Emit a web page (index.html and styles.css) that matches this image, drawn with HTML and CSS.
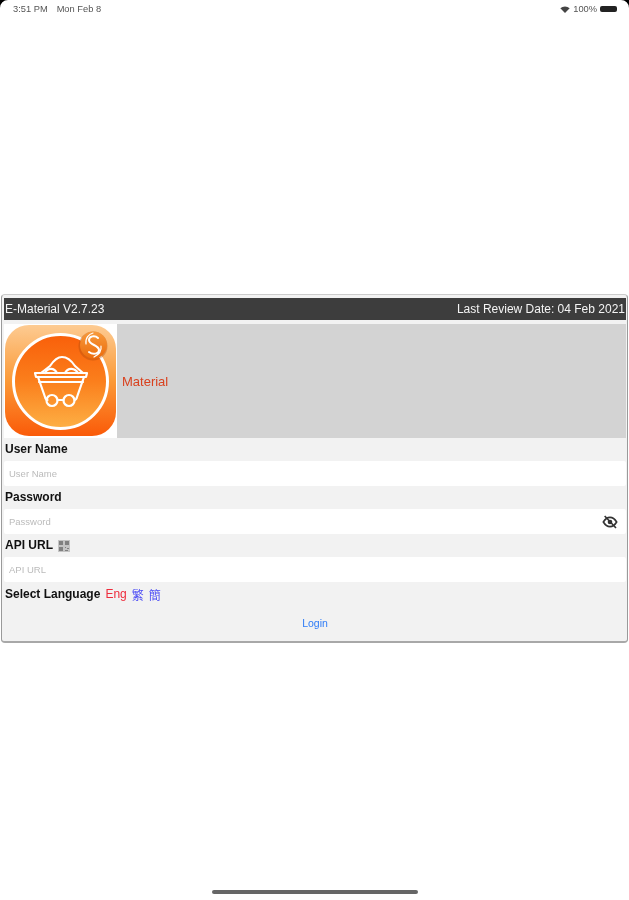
FILE: index.html
```html
<!DOCTYPE html>
<html lang="en">
<head>
    <meta charset="UTF-8">
    <meta name="viewport" content="width=device-width, initial-scale=1.0">
    <title>E-Material</title>
    <link rel="stylesheet" href="styles.css">
</head>
<body>
    <div class="corner corner-left"></div>
    <div class="corner corner-right"></div>

    <div class="status-bar">
        <span class="status-left"><span>3:51 PM</span><span>Mon Feb 8</span></span>
        <span class="status-right">
            <svg class="wifi" viewBox="0 0 12 9" width="10" height="7"><path d="M6 9 0 3a8.500 8.500 0 0 1 12 0z" fill="#444"/></svg>
            100%
            <span class="battery"></span>
        </span>
    </div>

    <div class="screen">
        <div class="panel">
            <div class="title-bar">
                <span>E-Material V2.7.23</span>
                <span>Last Review Date: 04 Feb 2021</span>
            </div>

            <div class="banner">
                <svg class="logo" viewBox="0 0 113 114" width="113" height="114">
                    <defs>
                        <linearGradient id="bg" x1="0" y1="0" x2="0" y2="1">
                            <stop offset="0" stop-color="#fdcb92"/>
                            <stop offset="0.5" stop-color="#fb9a38"/>
                            <stop offset="1" stop-color="#fa5a08"/>
                        </linearGradient>
                        <linearGradient id="disc" x1="0" y1="0" x2="0" y2="1">
                            <stop offset="0" stop-color="#f95f0a"/>
                            <stop offset="0.5" stop-color="#fb7f1c"/>
                            <stop offset="1" stop-color="#fdb045"/>
                        </linearGradient>
                        <linearGradient id="badge" x1="0" y1="0" x2="0" y2="1">
                            <stop offset="0" stop-color="#f79a3c"/>
                            <stop offset="1" stop-color="#ec6c0c"/>
                        </linearGradient>
                    </defs>
                    <rect x="1" y="1" width="111" height="111" rx="24" fill="url(#bg)"/>
                    <circle cx="56.500" cy="57.500" r="47" fill="url(#disc)" stroke="#fff" stroke-width="3"/>
                    <g fill="none" stroke="#fff" stroke-width="2.200" stroke-linejoin="round" stroke-linecap="round">
                        <path d="M31 49h52l-1 4H32z"/>
                        <path d="M35 58h44"/>
                        <path d="M34 53l7 20c.5 2 1.500 3 2.500 3M53.500 76h6M80 53l-7 20c-.5 2-1.500 3-2.500 3"/>
                        <path d="M37 49l9-7c4-6 8-9 12-9 5 0 9 3 13 9l8 7"/>
                        <path d="M41 49c2-5 9-6 12 0M61 49c3-6 10-5 13 0"/>
                        <circle cx="48" cy="76.500" r="5.500"/>
                        <circle cx="65" cy="76.500" r="5.500"/>
                    </g>
                    <circle cx="89" cy="22" r="14.500" fill="#a5490c" opacity="0.350"/>
                    <circle cx="89.500" cy="21" r="13.500" fill="url(#badge)"/>
                    <g fill="none" stroke="#fff" stroke-width="2" stroke-linecap="round">
                        <path d="M94 14c-3-3-9-2-9 2 0 5 10 5 10 10 0 4-6 5-10 2"/>
                        <path d="M82 20c-1-6 3-10 7-11M97 22c1 6-3 9-7 11" stroke-width="1.200"/>
                    </g>
                </svg>
                <div class="banner-text">Material</div>
            </div>

            <div class="form-label">User Name</div>
            <div class="field"><input type="text" placeholder="User Name"></div>

            <div class="form-label">Password</div>
            <div class="field">
                <input type="text" placeholder="Password">
                <svg class="eye" viewBox="0 0 24 24" width="16" height="16">
                    <path d="M2 12c3-5 6.500-7 10-7s7 2 10 7c-3 5-6.500 7-10 7s-7-2-10-7z" fill="none" stroke="#333" stroke-width="2.400"/>
                    <circle cx="12" cy="12" r="3.500" fill="#333"/>
                    <path d="M4 3l17 18" stroke="#333" stroke-width="2.400"/>
                </svg>
            </div>

            <div class="form-label">API URL
                <svg class="qr" viewBox="0 0 12 12" width="12" height="12">
                    <path d="M0 0h12v12H0z" fill="#c4c4c4"/>
                    <path d="M1 1h4v4H1zM7 1h4v4H7zM1 7h4v4H1zM7 7h1v1H7zM9 8h2v1H9zM7 10h3v1H7z" fill="#808080"/>
                </svg>
            </div>
            <div class="field"><input type="text" placeholder="API URL"></div>

            <div class="language-row">
                <span class="form-label">Select Language</span>
                <span class="lang lang-on">Eng</span>
                <span class="lang">繁</span>
                <span class="lang">簡</span>
            </div>

            <div class="login">Login</div>
        </div>
    </div>

    <div class="home-bar"></div>
</body>
</html>
```

FILE: styles.css
```css
html, body {
    margin: 0;
    padding: 0;
}
body {
    width: 629px;
    height: 900px;
    overflow: hidden;
    background: white;
    font-family: "Liberation Sans", Arial, sans-serif;
    display: flex;
    flex-direction: column;
    position: relative;
}
.corner {
    position: absolute;
    top: 0;
    width: 8px;
    height: 8px;
    background: #000;
    filter: blur(0.5px);
}
.corner-left {
    left: 0;
    clip-path: path("M0 0H8A8 8 0 0 0 0 8Z");
}
.corner-right {
    right: 0;
    clip-path: path("M0 0H8V8A8 8 0 0 0 0 0Z");
}
.status-bar {
    height: 18px;
    padding: 0 12px 0 13px;
    display: flex;
    justify-content: space-between;
    align-items: center;
    font-size: 9.300px;
    color: #555;
    filter: blur(0.4px);
}
.status-left {
    display: flex;
    gap: 9px;
}
.status-right {
    display: flex;
    align-items: center;
    gap: 3px;
}
.battery {
    width: 17px;
    height: 6px;
    border-radius: 2px;
    background: #222;
}
.screen {
    flex: 1;
    padding-top: 276px;
}
.panel {
    width: 627px;
    height: 349px;
    margin-left: 1px;
    box-sizing: border-box;
    border: 1px solid #9a9a9a;
    border-top-color: #ccc;
    border-bottom: 2px solid #a8a8a8;
    border-radius: 4px;
    background: #f2f2f2;
    padding: 3px 1px 0 2px;
    filter: blur(0.4px);
}
.title-bar {
    height: 22px;
    background: #3d3d3d;
    color: #f4f4f4;
    font-size: 12px;
    padding: 0 1px;
    display: flex;
    justify-content: space-between;
    align-items: center;
}
.banner {
    margin-top: 4px;
    height: 114px;
    background: #d3d3d3;
    display: flex;
    align-items: center;
    gap: 5px;
}
.logo {
    flex: none;
    background: white;
}
.banner-text {
    color: #d9411e;
    font-size: 13px;
}
.form-label {
    height: 23px;
    line-height: 23px;
    padding-left: 1px;
    font-size: 12px;
    font-weight: bold;
    color: #111;
    display: flex;
    align-items: center;
    gap: 5px;
}
.field {
    height: 25px;
    background: white;
    display: flex;
    align-items: center;
    padding: 0 8px 0 5px;
    border-radius: 2px;
}
.field input {
    flex: 1;
    border: none;
    outline: none;
    padding: 0;
    background: transparent;
    font-family: inherit;
    font-size: 9.500px;
}
.field input::placeholder {
    color: #bbb;
}
.language-row {
    display: flex;
    align-items: center;
    height: 24px;
    gap: 5px;
}
.lang {
    font-size: 12px;
    color: #4d4df5;
    font-family: "Liberation Sans", "Noto Sans CJK TC", sans-serif;
}
.lang-on {
    color: #ee2c3c;
}
.login {
    margin-top: 11px;
    text-align: center;
    color: #2f7cf6;
    font-size: 10.500px;
}
.home-bar {
    position: absolute;
    left: 212px;
    top: 890px;
    width: 206px;
    height: 4px;
    border-radius: 2px;
    background: #666;
    filter: blur(0.4px);
}
```
